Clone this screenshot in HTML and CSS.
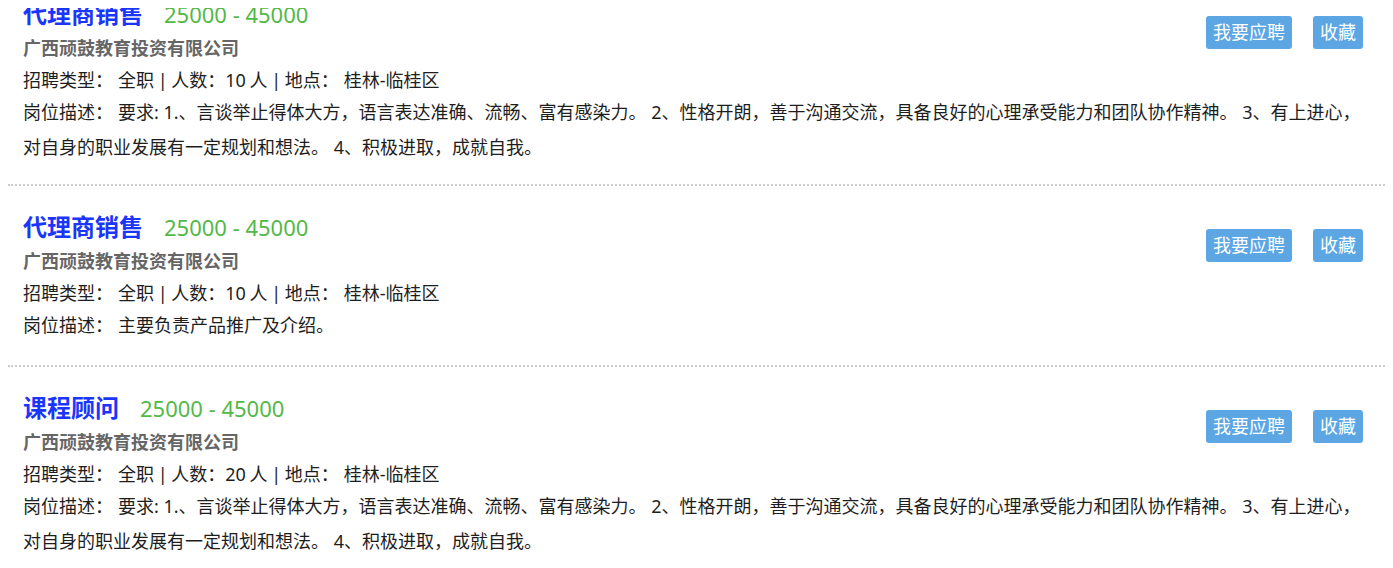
FILE: index.html
```html
<!DOCTYPE html>
<html lang="zh-CN">
<head>
  <meta charset="UTF-8">
  <meta name="viewport" content="width=device-width, initial-scale=1.0">
  <title>招聘职位列表</title>
  <link rel="stylesheet" href="styles.css">
</head>
<body>
  <main class="job-list">
    <div class="job">
      <div class="job-actions">
        <a class="btn" href="#">我要应聘</a>
        <a class="btn" href="#">收藏</a>
      </div>
      <h3 class="job-title">代理商销售<span class="job-salary">25000 - 45000</span></h3>
      <p class="job-company">广西顽鼓教育投资有限公司</p>
      <p class="job-meta"><span class="label">招聘类型：</span>全职 | 人数：10 人 | <span class="label">地点：</span>桂林-临桂区</p>
      <p class="job-desc"><span class="label">岗位描述：</span>要求: 1.、言谈举止得体大方，语言表达准确、流畅、富有感染力。 2、性格开朗，善于沟通交流，具备良好的心理承受能力和团队协作精神。 3、有上进心，对自身的职业发展有一定规划和想法。 4、积极进取，成就自我。</p>
    </div>
    <div class="job">
      <div class="job-actions">
        <a class="btn" href="#">我要应聘</a>
        <a class="btn" href="#">收藏</a>
      </div>
      <h3 class="job-title">代理商销售<span class="job-salary">25000 - 45000</span></h3>
      <p class="job-company">广西顽鼓教育投资有限公司</p>
      <p class="job-meta"><span class="label">招聘类型：</span>全职 | 人数：10 人 | <span class="label">地点：</span>桂林-临桂区</p>
      <p class="job-desc"><span class="label">岗位描述：</span>主要负责产品推广及介绍。</p>
    </div>
    <div class="job">
      <div class="job-actions">
        <a class="btn" href="#">我要应聘</a>
        <a class="btn" href="#">收藏</a>
      </div>
      <h3 class="job-title">课程顾问<span class="job-salary">25000 - 45000</span></h3>
      <p class="job-company">广西顽鼓教育投资有限公司</p>
      <p class="job-meta"><span class="label">招聘类型：</span>全职 | 人数：20 人 | <span class="label">地点：</span>桂林-临桂区</p>
      <p class="job-desc"><span class="label">岗位描述：</span>要求: 1.、言谈举止得体大方，语言表达准确、流畅、富有感染力。 2、性格开朗，善于沟通交流，具备良好的心理承受能力和团队协作精神。 3、有上进心，对自身的职业发展有一定规划和想法。 4、积极进取，成就自我。</p>
    </div>
  </main>
</body>
</html>
```

FILE: styles.css
```css
:root {
  --main-font: "Noto Sans", "Noto Sans CJK SC", sans-serif;
  --text-color: #1e1e1e;
  --title-color: #1a36fa;
  --salary-color: #52b847;
  --company-color: #666666;
  --btn-color: #5ca6e4;
  --line-color: #cccccc;
}

html {
  box-sizing: border-box;
  font-family: var(--main-font);
  color: var(--text-color);
}

*,
*::before,
*::after {
  box-sizing: inherit;
}

body {
  margin: 8px;
}

.job-list {
  margin-top: -35px;
}

.job {
  padding: 24px 15px 22px 15px;
  border-bottom: 2px dotted var(--line-color);
}

.job:first-child {
  padding-bottom: 19px;
}

.job p {
  margin: 0;
  font-size: 18px;
}

.job-actions {
  float: right;
  display: flex;
  gap: 21px;
  margin-top: 19px;
  margin-right: 7px;
}

.btn {
  display: block;
  height: 33px;
  padding: 0 7px;
  line-height: 33px;
  font-size: 18px;
  color: white;
  text-decoration: none;
  background-color: var(--btn-color);
  border-radius: 3px;
}

.job-title {
  margin: 0;
  height: 34px;
  line-height: 34px;
  font-size: 24px;
  font-weight: bold;
  color: var(--title-color);
}

.job-salary {
  margin-left: 21px;
  font-size: 22px;
  font-weight: normal;
  color: var(--salary-color);
}

.job .job-company {
  line-height: 34px;
  font-weight: bold;
  color: var(--company-color);
}

.job-meta {
  line-height: 30px;
  word-spacing: -1px;
}

.job-desc {
  line-height: 35px;
}

.label {
  margin-right: 5px;
}
```
